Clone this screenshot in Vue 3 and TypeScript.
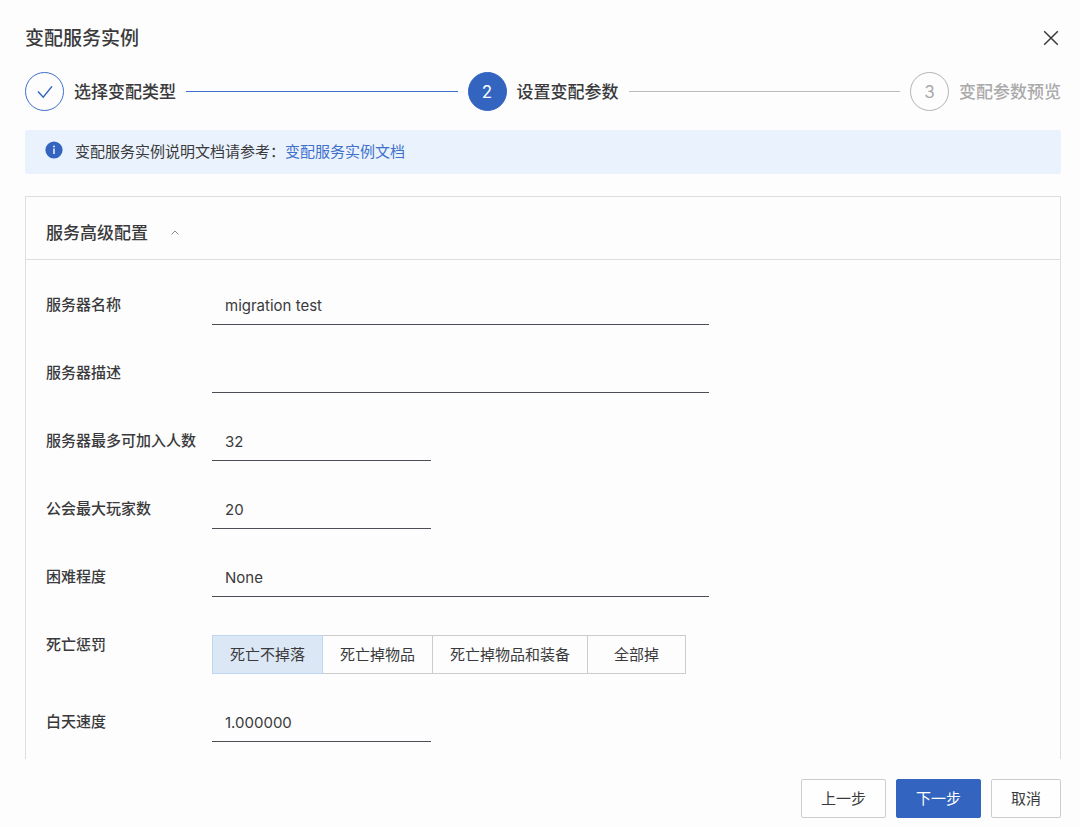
<script setup lang="ts">
import { reactive, ref } from 'vue'

interface Step {
  title: string
  state: 'done' | 'current' | 'pending'
}

interface TextField {
  id: string
  label: string
  value: string
  size: 'wide' | 'narrow'
}

const steps: Step[] = [
  { title: '选择变配类型', state: 'done' },
  { title: '设置变配参数', state: 'current' },
  { title: '变配参数预览', state: 'pending' },
]

const fields = reactive<TextField[]>([
  { id: 'server-name', label: '服务器名称', value: 'migration test', size: 'wide' },
  { id: 'server-description', label: '服务器描述', value: '', size: 'wide' },
  { id: 'max-players', label: '服务器最多可加入人数', value: '32', size: 'narrow' },
  { id: 'guild-players', label: '公会最大玩家数', value: '20', size: 'narrow' },
  { id: 'difficulty', label: '困难程度', value: 'None', size: 'wide' },
])

const penalties = ['死亡不掉落', '死亡掉物品', '死亡掉物品和装备', '全部掉']
const penalty = ref(penalties[0])
const daySpeed = ref('1.000000')
const expanded = ref(true)
</script>

<template>
  <main class="dialog">
    <header class="dialog-header">
      <h1>变配服务实例</h1>
      <button class="close" type="button" aria-label="关闭">
        <svg viewBox="0 0 16 16" width="16" height="16" aria-hidden="true">
          <path d="M1.2 1.2 14.8 14.8M14.8 1.2 1.2 14.8" />
        </svg>
      </button>
    </header>

    <ol class="steps">
      <li v-for="(step, index) in steps" :key="step.title" class="step" :class="step.state">
        <span class="marker">
          <svg v-if="step.state === 'done'" viewBox="0 0 16 14" width="16" height="14" aria-hidden="true">
            <path d="M1 6.6 6.2 12.2 15 1.4" />
          </svg>
          <template v-else>{{ index + 1 }}</template>
        </span>
        <span class="step-title">{{ step.title }}</span>
        <span v-if="index < steps.length - 1" class="track"></span>
      </li>
    </ol>

    <div class="notice">
      <svg class="info" viewBox="0 0 18 18" width="18" height="18" aria-hidden="true">
        <circle cx="9" cy="9" r="8.6" fill="#3264c0" />
        <circle cx="9" cy="5.4" r="0.9" fill="#fff" />
        <path d="M9 7.6V13" stroke="#fff" stroke-width="1.4" />
      </svg>
      <p>变配服务实例说明文档请参考：<a href="#">变配服务实例文档</a></p>
    </div>

    <div class="content">
      <section class="panel">
        <header class="panel-header">
          <h2>服务高级配置</h2>
          <button class="toggle" type="button" aria-label="展开或收起" :aria-expanded="expanded" @click="expanded = !expanded">
            <svg viewBox="0 0 8 5" width="8" height="5" aria-hidden="true">
              <path d="M0.6 4.4 4 1 7.4 4.4" />
            </svg>
          </button>
        </header>

        <form v-if="expanded" class="form" @submit.prevent>
          <div v-for="field in fields" :key="field.id" class="row">
            <label class="label" :for="field.id">{{ field.label }}</label>
            <input :id="field.id" v-model="field.value" class="input" :class="field.size" type="text" />
          </div>
          <div class="row" role="radiogroup" aria-labelledby="penalty-label">
            <span id="penalty-label" class="label">死亡惩罚</span>
            <div class="segments">
              <label v-for="item in penalties" :key="item" class="segment" :class="{ selected: item === penalty }">
                <input v-model="penalty" type="radio" name="penalty" :value="item" />
                <span>{{ item }}</span>
              </label>
            </div>
          </div>
          <div class="row">
            <label class="label" for="day-speed">白天速度</label>
            <input id="day-speed" v-model="daySpeed" class="input narrow" type="text" />
          </div>
        </form>
      </section>
    </div>

    <footer class="actions">
      <button class="button" type="button">上一步</button>
      <button class="button primary" type="button">下一步</button>
      <button class="button" type="button">取消</button>
    </footer>
  </main>
</template>

<style>
body {
  margin: 0;
  background: #fdfdfd;
}
</style>

<style scoped>
.dialog,
.dialog * {
  box-sizing: border-box;
}

.dialog {
  display: flex;
  flex-direction: column;
  height: 100vh;
  padding: 18px 19px 9px 25px;
  color: #3a3a3c;
  font-family: Inter, "Noto Sans CJK SC", sans-serif;
  font-size: 15px;
  line-height: 22px;
}

button,
input {
  font: inherit;
  color: inherit;
}

.dialog-header {
  display: flex;
  flex: none;
  align-items: center;
  justify-content: space-between;
  height: 40px;
}

h1 {
  margin: 0;
  padding-top: 2px;
  font-size: 19px;
  font-weight: 500;
}

.close {
  display: flex;
  padding: 2px;
  border: 0;
  background: none;
}

.close svg,
.marker svg,
.toggle svg {
  fill: none;
  stroke: currentColor;
}

.close svg {
  stroke-width: 1.5;
}

.steps {
  display: flex;
  flex: none;
  gap: 10px;
  margin: 14px 0 19px;
  padding: 0;
  list-style: none;
}

.step {
  display: flex;
  flex: 1 1 auto;
  align-items: center;
  gap: 10px;
}

.step:last-child {
  flex: none;
}

.marker {
  display: flex;
  align-items: center;
  justify-content: center;
  width: 39px;
  height: 39px;
  border: 1px solid #3f70cb;
  border-radius: 50%;
  color: #3264c0;
  font-size: 17px;
}

.marker svg {
  stroke-width: 1.5;
}

.current .marker {
  background: #3264c0;
  border-color: #3264c0;
  color: #fff;
}

.step-title {
  font-size: 17px;
  font-weight: 500;
}

.track {
  flex: 1;
  height: 1px;
  background: #3f70cb;
}

.current .track {
  background: #bbb;
}

.pending,
.pending .marker {
  color: #aaa;
  border-color: #b3b3b3;
}

.notice {
  display: flex;
  flex: none;
  gap: 12px;
  padding: 11px 20px;
  border-radius: 2px;
  background: #eaf3fd;
}

.notice p {
  margin: 0;
}

.notice a {
  color: #3f70cb;
  text-decoration: none;
}

.content {
  flex: 1;
  min-height: 0;
  margin-top: 22px;
  overflow: hidden;
}

.panel {
  min-height: 100%;
  padding-bottom: 29px;
  border: 1px solid #dedede;
}

.panel-header {
  display: flex;
  align-items: center;
  gap: 21px;
  height: 63px;
  padding: 9px 20px 0;
  border-bottom: 1px solid #dedede;
}

h2 {
  margin: 0;
  font-size: 17px;
  font-weight: 500;
}

.toggle {
  display: flex;
  padding: 2px;
  border: 0;
  background: none;
  color: #888;
}

.form {
  display: flex;
  flex-direction: column;
  gap: 29px;
  padding: 26px 20px 0;
}

.row {
  display: flex;
  align-items: flex-start;
}

.label {
  flex: none;
  width: 166px;
  line-height: 37px;
  font-weight: 500;
}

.input {
  height: 39px;
  padding: 0 13px;
  border: 0;
  border-bottom: 1px solid #4b4e55;
  border-radius: 0;
  outline: 0;
  background: transparent;
}

.wide {
  width: 497px;
}

.narrow {
  width: 219px;
}

.segments {
  display: flex;
  margin-top: 9px;
}

.segment {
  display: flex;
  position: relative;
  align-items: center;
  justify-content: center;
  min-width: 98px;
  height: 39px;
  padding: 0 17px;
  border: 1px solid #ccc;
}

.segment + .segment {
  border-left: 0;
}

.segment.selected {
  border-color: #bdd7f0;
  background: #dce7f6;
}

.segment input {
  position: absolute;
  inset: 0;
  margin: 0;
  opacity: 0;
}

.actions {
  display: flex;
  flex: none;
  justify-content: flex-end;
  gap: 10px;
  margin-top: 20px;
}

.button {
  height: 39px;
  padding: 0 19px;
  border: 1px solid #ccc;
  border-radius: 2px;
  background: #fefefe;
}

.button.primary {
  border-color: #3264c0;
  background: #3264c0;
  color: #fff;
}
</style>
